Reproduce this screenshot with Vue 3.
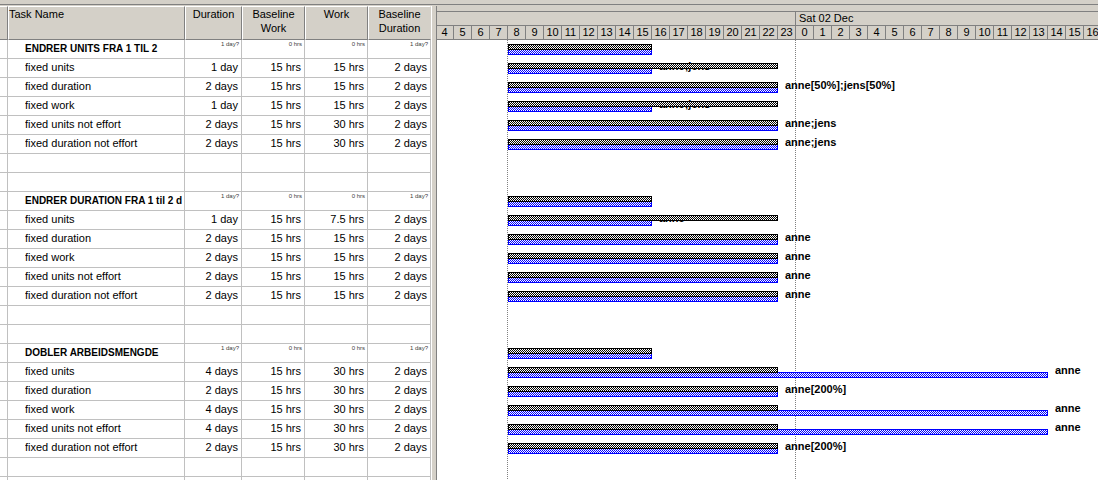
<script setup>
const HOUR = 18
const CHART_START = 4

const group = (name) => ({
  name,
  summary: true,
  cells: ['1 day?', '0 hrs', '0 hrs', '1 day?'],
  actual: 8,
  baseline: 8,
})

const task = (name, duration, work, baseline, label, actual = 15) => ({
  name,
  cells: [duration, '15 hrs', work, '2 days'],
  actual,
  baseline,
  label,
})

const blank = () => ({ name: '', cells: ['', '', '', ''] })

const rows = [
  group('ENDRER UNITS FRA 1 TIL 2'),
  task('fixed units', '1 day', '15 hrs', 8, 'anne;jens'),
  task('fixed duration', '2 days', '15 hrs', 15, 'anne[50%];jens[50%]'),
  task('fixed work', '1 day', '15 hrs', 8, 'anne;jens'),
  task('fixed units not effort', '2 days', '30 hrs', 15, 'anne;jens'),
  task('fixed duration not effort', '2 days', '30 hrs', 15, 'anne;jens'),
  blank(),
  blank(),
  group('ENDRER DURATION FRA 1 til 2 d'),
  task('fixed units', '1 day', '7.5 hrs', 8, 'anne'),
  task('fixed duration', '2 days', '15 hrs', 15, 'anne'),
  task('fixed work', '2 days', '15 hrs', 15, 'anne'),
  task('fixed units not effort', '2 days', '15 hrs', 15, 'anne'),
  task('fixed duration not effort', '2 days', '15 hrs', 15, 'anne'),
  blank(),
  blank(),
  group('DOBLER ARBEIDSMENGDE'),
  task('fixed units', '4 days', '30 hrs', 30, 'anne'),
  task('fixed duration', '2 days', '30 hrs', 15, 'anne[200%]'),
  task('fixed work', '4 days', '30 hrs', 30, 'anne'),
  task('fixed units not effort', '4 days', '30 hrs', 30, 'anne'),
  task('fixed duration not effort', '2 days', '30 hrs', 15, 'anne[200%]'),
  blank(),
  blank(),
]

const days = [
  { label: '', hours: Array.from({ length: 24 - CHART_START }, (_, i) => i + CHART_START) },
  { label: 'Sat 02 Dec', hours: Array.from({ length: 17 }, (_, i) => i) },
]

const px = (hours) => `${hours * HOUR}px`
</script>

<template>
  <main class="app">
    <svg class="defs" aria-hidden="true">
      <defs>
        <pattern id="dots-black" width="2" height="2" patternUnits="userSpaceOnUse">
          <rect width="2" height="2" fill="#fff" />
          <rect width="1" height="1" fill="#000" />
          <rect x="1" y="1" width="1" height="1" fill="#000" />
        </pattern>
        <pattern id="dots-blue" width="2" height="2" patternUnits="userSpaceOnUse">
          <rect width="2" height="2" fill="#fff" />
          <rect width="1" height="1" fill="#00f" />
          <rect x="1" y="1" width="1" height="1" fill="#00f" />
        </pattern>
      </defs>
    </svg>
    <div class="toolbar-edge"></div>
    <div class="panes">
      <section class="sheet">
        <table>
          <colgroup>
            <col class="c-row" />
            <col class="c-name" />
            <col class="c-a" />
            <col class="c-b" />
            <col class="c-b" />
            <col class="c-b" />
          </colgroup>
          <thead>
            <tr>
              <th></th>
              <th class="left">Task Name</th>
              <th>Duration</th>
              <th>Baseline Work</th>
              <th>Work</th>
              <th>Baseline Duration</th>
            </tr>
          </thead>
          <tbody>
            <tr v-for="(row, i) in rows" :key="i" :class="{ summary: row.summary }">
              <td></td>
              <td class="name"><div class="clip">{{ row.name }}</div></td>
              <td v-for="(cell, j) in row.cells" :key="j" class="value">{{ cell }}</td>
            </tr>
          </tbody>
        </table>
      </section>
      <div class="splitter"></div>
      <section class="gantt">
        <header class="scale">
          <div class="scale-top"></div>
          <div class="days">
            <div v-for="(day, d) in days" :key="d" class="day">
              <div class="day-name">{{ day.label }}</div>
              <div class="hours">
                <span v-for="h in day.hours" :key="h" class="hour">{{ h }}</span>
              </div>
            </div>
          </div>
        </header>
        <div class="chart">
          <div class="guide work-start"></div>
          <div class="guide midnight"></div>
          <div v-for="(row, i) in rows" :key="i" class="lane">
            <template v-if="row.actual">
              <svg class="bar baseline" :style="{ width: px(row.baseline) }">
                <rect width="100%" height="100%" fill="url(#dots-blue)" />
              </svg>
              <span
                v-if="row.label"
                class="label"
                :style="{ marginLeft: px(row.baseline) }"
              >{{ row.label }}</span>
              <svg class="bar actual" :style="{ width: px(row.actual) }">
                <rect width="100%" height="100%" fill="url(#dots-black)" />
              </svg>
            </template>
          </div>
        </div>
      </section>
    </div>
  </main>
</template>

<style>
body {
  margin: 0;
}
</style>

<style scoped>
.app {
  display: flex;
  flex-direction: column;
  height: 100vh;
  overflow: hidden;
  background: #fff;
  color: #000;
  font: 11px/14px "Liberation Sans", Arial, sans-serif;
}
.defs {
  position: absolute;
  width: 0;
  height: 0;
}
.toolbar-edge {
  flex: none;
  height: 3px;
  border-top: 1px solid #d4d0c8;
  border-bottom: 1px solid #808080;
  background: #d4d0c8;
}
.panes {
  flex: 1;
  min-height: 0;
  display: flex;
  border-top: 1px solid #d4d0c8;
}
.sheet {
  flex: none;
  width: 431px;
  overflow: hidden;
}
table {
  width: 100%;
  table-layout: fixed;
  border-collapse: separate;
  border-spacing: 0;
}
.c-row { width: 8px; }
.c-name { width: 177px; }
.c-a { width: 57px; }
.c-b { width: 63px; }
th {
  box-sizing: border-box;
  height: 34px;
  padding: 0 4px;
  vertical-align: top;
  font-weight: normal;
  font-size: 11px;
  background: #d4d0c8;
  border-top: 1px solid #fff;
  border-left: 1px solid #fff;
  border-right: 1px solid #808080;
  border-bottom: 1px solid #808080;
}
th:first-child,
td:first-child {
  padding: 0;
}
th:first-child {
  border-left: 0;
}
th:last-child {
  border-right-color: #d4d0c8;
}
.left {
  padding-left: 0;
  text-align: left;
}
td {
  box-sizing: border-box;
  height: 19px;
  padding: 0 3px;
  line-height: 16px;
  vertical-align: top;
  white-space: nowrap;
  border-right: 1px solid #c0c0c0;
  border-bottom: 1px solid #c0c0c0;
}
.name {
  padding: 0 2px 0 17px;
}
.clip {
  overflow: hidden;
}
.value {
  text-align: right;
}
.summary .name {
  font-size: 10px;
  line-height: 18px;
  font-weight: bold;
}
.summary .value {
  padding: 0 2px;
  font-size: 6px;
  line-height: 9px;
  color: #404040;
}
.splitter {
  flex: none;
  width: 4px;
  background: #d4d0c8;
  border-left: 1px solid #fff;
  border-right: 1px solid #808080;
}
.gantt {
  flex: 1;
  min-width: 0;
  display: flex;
  flex-direction: column;
  overflow: hidden;
}
.scale {
  flex: none;
  background: #d4d0c8;
}
.scale-top {
  height: 5px;
  border-bottom: 1px solid #808080;
}
.days {
  display: flex;
  margin-left: -1px;
}
.day {
  flex: none;
}
.day-name {
  height: 13px;
  padding-left: 3px;
  line-height: 12px;
  border-right: 1px solid #808080;
  border-bottom: 1px solid #808080;
}
.hours {
  display: flex;
}
.hour {
  box-sizing: border-box;
  width: 18px;
  height: 14px;
  line-height: 12px;
  text-align: center;
  border-right: 1px solid #808080;
  border-bottom: 1px solid #808080;
}
.chart {
  flex: 1;
  min-height: 0;
  position: relative;
  overflow: hidden;
}
.guide {
  position: absolute;
  top: 0;
  bottom: 0;
  width: 1px;
  background: repeating-linear-gradient(#808080 0 1px, #fff 1px 2px);
}
.work-start { left: 70px; }
.midnight { left: 358px; }
.lane {
  position: relative;
  height: 19px;
  padding-left: 71px;
}
.bar {
  box-sizing: border-box;
  position: absolute;
  left: 71px;
  height: 6px;
  shape-rendering: crispEdges;
}
.actual {
  top: 4px;
  border: 1px solid #000;
}
.baseline {
  top: 9px;
  border: 1px solid #00f;
}
.label {
  display: inline-block;
  padding-left: 7px;
  line-height: 15px;
  font-weight: bold;
  white-space: nowrap;
}
</style>
